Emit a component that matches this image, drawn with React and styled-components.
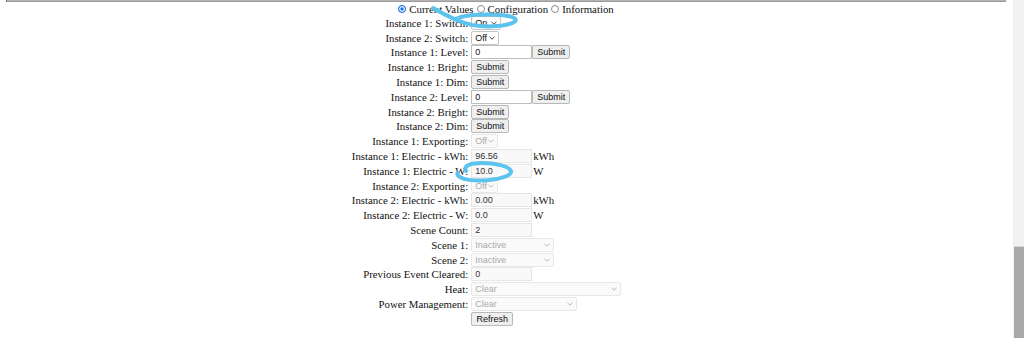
import React from 'react';
import styled, { createGlobalStyle } from 'styled-components';

const GlobalStyle = createGlobalStyle`
  html, body {
    margin: 0;
    padding: 0;
    background: #fff;
    overflow: hidden;
  }
  body {
    font-family: "Liberation Serif", "Times New Roman", serif;
  }
`;

const Viewport = styled.div`
  display: flex;
  width: 1024px;
  height: 338px;
`;

const Page = styled.div`
  position: relative;
  flex: 1;
  display: flex;
  flex-direction: column;
`;

const FrameEdge = styled.div`
  height: 1px;
  margin: 0 7px 0 6px;
  border-left: 1px solid #6e6e6e;
  border-bottom: 1px solid #9a9a9a;
  background: #b4b4b4;
`;

const Tabs = styled.div`
  display: flex;
  justify-content: center;
  align-items: center;
  height: 13.5px;
  font-size: 10.8px;
  color: #111;
  padding-left: 2px;
`;

const TabOption = styled.label`
  display: flex;
  align-items: center;
  gap: 3px;
  margin-right: 3px;
`;

const Radio = styled.span`
  box-sizing: border-box;
  width: 8px;
  height: 8px;
  border-radius: 50%;
  border: 1px solid ${p => (p.$checked ? '#1a73e8' : '#8a8a8a')};
  background: ${p => (p.$checked ? '#1a73e8' : '#fff')};
  box-shadow: ${p => (p.$checked ? 'inset 0 0 0 1.3px #fff' : 'none')};
`;

const FormWrap = styled.div`
  display: flex;
  justify-content: center;
  padding-right: 40px;
`;

const FormGrid = styled.div`
  display: grid;
  grid-template-columns: auto auto;
  grid-auto-rows: 14.8px;
  column-gap: 3px;
  align-items: center;
`;

const Label = styled.div`
  text-align: right;
  font-size: 10.8px;
  color: #111;
  white-space: nowrap;
`;

const Field = styled.div`
  display: flex;
  align-items: center;
  font-size: 10.8px;
  color: #111;
`;

const TextInput = styled.div`
  box-sizing: border-box;
  width: 61px;
  height: 14px;
  padding: 0 3px;
  display: flex;
  align-items: center;
  font-family: "Liberation Sans", Arial, sans-serif;
  font-size: 9px;
  color: ${p => (p.$readOnly ? '#333' : '#111')};
  background: ${p => (p.$readOnly ? '#f9f9f9' : '#fff')};
  border: 1px solid ${p => (p.$readOnly ? '#e6e6e6' : '#bdbdbd')};
`;

const Button = styled.button`
  box-sizing: border-box;
  height: 14px;
  width: ${p => p.$w || 38}px;
  padding: 0;
  margin: 0;
  font-family: "Liberation Sans", Arial, sans-serif;
  font-size: 9px;
  color: #111;
  background: #efefef;
  border: 1px solid #b8b8b8;
  border-radius: 2px;
  line-height: 12px;
`;

const Select = styled.div`
  box-sizing: border-box;
  width: ${p => p.$w}px;
  height: 14px;
  padding: 0 3px 0 3px;
  display: flex;
  align-items: center;
  justify-content: space-between;
  font-family: "Liberation Sans", Arial, sans-serif;
  font-size: 9px;
  color: ${p => (p.$disabled ? '#aaa' : '#111')};
  background: ${p => (p.$disabled ? '#fafafa' : '#fff')};
  border: 1px solid ${p => (p.$disabled ? '#e8e8e8' : '#c4c4c4')};
  border-radius: 2px;
`;

const Unit = styled.span`
  margin-left: 1px;
`;

const Scrollbar = styled.div`
  width: 11px;
  display: flex;
  flex-direction: column;
  background: #f1f1f1;
`;

const Thumb = styled.div`
  margin-top: auto;
  height: 91px;
  margin-left: 1px;
  background: #a8a8a8;
  border-top: 1px solid #d8d8d8;
`;

const Scribble = styled.svg`
  position: absolute;
  left: 0;
  top: 0;
  width: 1013px;
  height: 338px;
  pointer-events: none;
`;

const Chevron = ({ color }) => (
  <svg width="6" height="4" viewBox="0 0 6 4">
    <path d="M0.5 0.8 L3 3.2 L5.5 0.8" fill="none" stroke={color} strokeWidth="0.9" />
  </svg>
);

const Sel = ({ w, value, disabled }) => (
  <Select $w={w} $disabled={disabled}>
    <span>{value}</span>
    <Chevron color={disabled ? '#b0b0b0' : '#333'} />
  </Select>
);

const rows = [
  ['Instance 1: Switch:', <Sel w={30} value="On" />],
  ['Instance 2: Switch:', <Sel w={28} value="Off" />],
  ['Instance 1: Level:', <><TextInput>0</TextInput><Button>Submit</Button></>],
  ['Instance 1: Bright:', <Button>Submit</Button>],
  ['Instance 1: Dim:', <Button>Submit</Button>],
  ['Instance 2: Level:', <><TextInput>0</TextInput><Button>Submit</Button></>],
  ['Instance 2: Bright:', <Button>Submit</Button>],
  ['Instance 2: Dim:', <Button>Submit</Button>],
  ['Instance 1: Exporting:', <Sel w={27} value="Off" disabled />],
  ['Instance 1: Electric - kWh:', <><TextInput $readOnly>96.56</TextInput><Unit>kWh</Unit></>],
  ['Instance 1: Electric - W:', <><TextInput $readOnly>10.0</TextInput><Unit>W</Unit></>],
  ['Instance 2: Exporting:', <Sel w={27} value="Off" disabled />],
  ['Instance 2: Electric - kWh:', <><TextInput $readOnly>0.00</TextInput><Unit>kWh</Unit></>],
  ['Instance 2: Electric - W:', <><TextInput $readOnly>0.0</TextInput><Unit>W</Unit></>],
  ['Scene Count:', <TextInput $readOnly>2</TextInput>],
  ['Scene 1:', <Sel w={83} value="Inactive" disabled />],
  ['Scene 2:', <Sel w={83} value="Inactive" disabled />],
  ['Previous Event Cleared:', <TextInput $readOnly>0</TextInput>],
  ['Heat:', <Sel w={150} value="Clear" disabled />],
  ['Power Management:', <Sel w={106} value="Clear" disabled />],
  ['', <Button $w={42}>Refresh</Button>],
];

const App = () => {
  return (
    <Viewport>
      <GlobalStyle />
      <Page>
        <FrameEdge />
        <Tabs>
          <TabOption><Radio $checked />Current Values</TabOption>
          <TabOption><Radio />Configuration</TabOption>
          <TabOption><Radio />Information</TabOption>
        </Tabs>
        <FormWrap>
          <FormGrid>
            {rows.map(([label, field], i) => (
              <React.Fragment key={i}>
                <Label>{label}</Label>
                <Field>{field}</Field>
              </React.Fragment>
            ))}
          </FormGrid>
        </FormWrap>
        <Scribble viewBox="0 0 1013 338">
          <path
            d="M433 8 C445 15, 458 22, 472 25 C488 28, 509 26, 515 21.5 C519 17, 505 14.5, 488 14.5 C474 14.5, 462 16, 457 18.5"
            fill="none" stroke="#5cc3ef" strokeWidth="4" strokeLinecap="round"
          />
          <path
            d="M466 171 C463 166, 470 163, 482 163 C495 163, 509 166, 511 171 C512 176, 498 180, 482 180.5 C468 181, 456 178, 457.5 173"
            fill="none" stroke="#5cc3ef" strokeWidth="4" strokeLinecap="round"
          />
        </Scribble>
      </Page>
      <Scrollbar>
        <Thumb />
      </Scrollbar>
    </Viewport>
  );
};

export default App;
